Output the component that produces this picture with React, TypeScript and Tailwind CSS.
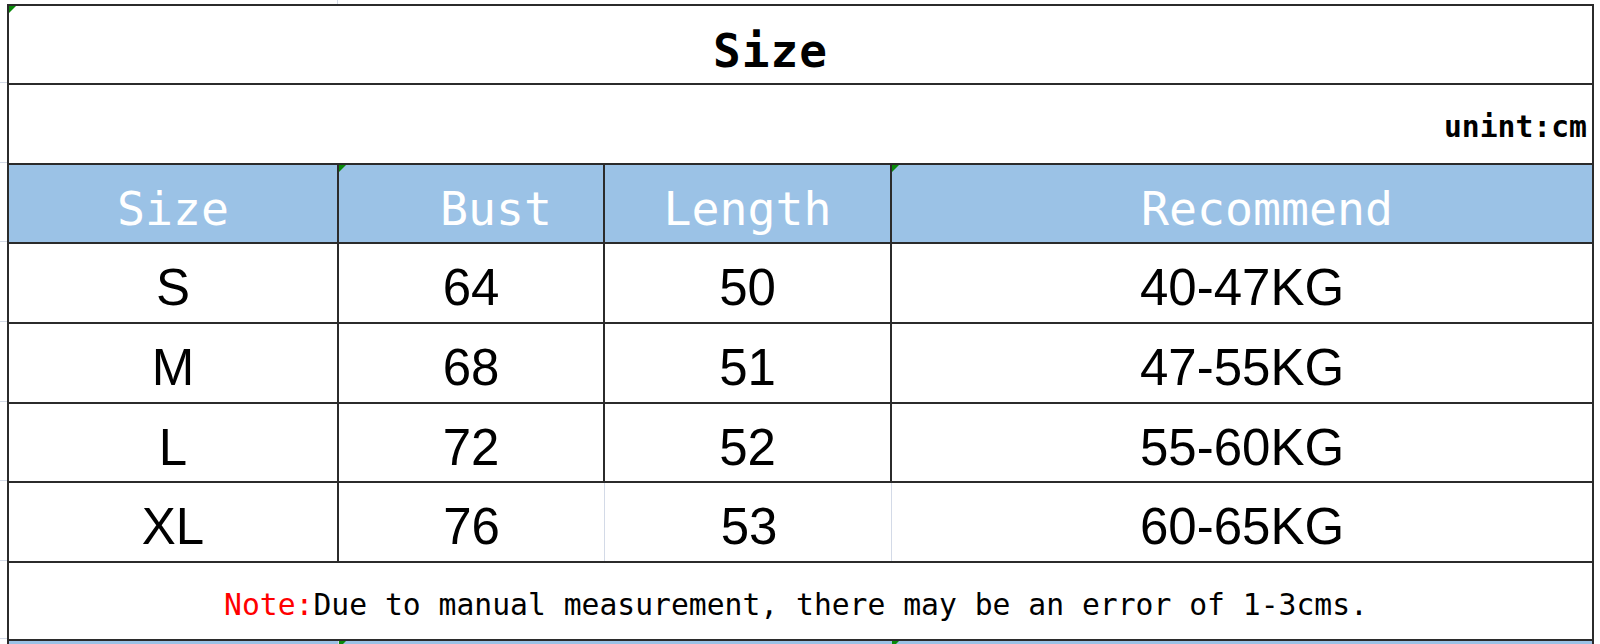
const ROWS = [
  { size: "S", bust: "64", length: "50", rec: "40-47KG" },
  { size: "M", bust: "68", length: "51", rec: "47-55KG" },
  { size: "L", bust: "72", length: "52", rec: "55-60KG" },
  { size: "XL", bust: "76", length: "53", rec: "60-65KG" },
];

// row heights incl. bottom border, matched to the sheet
const BODY_H = ["h-[80px]", "h-[80px]", "h-[79px]", "h-[80px]"];
const GUTTER_H = ["h-[83px]", "h-[80px]", "h-[79px]", "h-[80px]", "h-[80px]", "h-[79px]", "h-[80px]", "h-[78px]"];

const mono = "font-['DejaVu_Sans_Mono',monospace]";
const sans = "font-['Liberation_Sans',Arial,sans-serif]";

function Flag() {
  return (
    <span className="absolute left-0 top-0 w-0 h-0 border-t-[7px] border-t-[#0a8a0a] border-r-[7px] border-r-transparent" />
  );
}

export default function App() {
  return (
    <div className="w-[1600px] h-[644px] bg-white overflow-hidden flex">
      {/* spreadsheet gutter */}
      <div className="w-[7px] shrink-0 flex flex-col">
        {GUTTER_H.map((h, i) => (
          <div key={i} className={`${h} shrink-0 border-b border-[#d3dae7]`} />
        ))}
      </div>

      <div className="flex flex-col">
        {/* strip above the table */}
        <div className="h-[4px] shrink-0 flex">
          <div className="w-[331px] border-r border-[#d3dae7]" />
        </div>

        <div className="w-[1587px] shrink-0 border-2 border-b-0 border-[#2b2b2b] text-black">
          {/* title */}
          <div className={`relative h-[79px] border-b-2 border-[#2b2b2b] flex items-center justify-center pr-[60px] pt-[12px] ${mono}`}>
            <Flag />
            <span className="text-[46px] leading-none font-bold tracking-[1px]">Size</span>
          </div>

          {/* unit */}
          <div className={`h-[80px] border-b-2 border-[#2b2b2b] flex items-center justify-end pr-[5px] pt-[6px] ${mono}`}>
            <span className="text-[29.7px] leading-none font-bold">unint:cm</span>
          </div>

          {/* header */}
          <div className={`h-[79px] border-b-2 border-[#2b2b2b] bg-[#9bc2e6] flex text-white text-[46.5px] leading-none ${mono}`}>
            <div className="w-[330px] border-r-2 border-[#2b2b2b] flex items-center justify-center pt-[11px]">Size</div>
            <div className="relative w-[266px] border-r-2 border-[#2b2b2b] flex items-center justify-center pt-[11px] pl-[50px]">
              <Flag />
              Bust
            </div>
            <div className="w-[287px] border-r-2 border-[#2b2b2b] flex items-center justify-center pt-[11px]">Length</div>
            <div className="relative flex-1 flex items-center justify-center pt-[11px] pl-[50px]">
              <Flag />
              Recommend
            </div>
          </div>

          {/* body */}
          {ROWS.map((r, i) => {
            const last = i === ROWS.length - 1;
            const inner = last ? "border-[#d3dae7] border-r" : "border-[#2b2b2b] border-r-2";
            return (
              <div key={r.size} className={`${BODY_H[i]} border-b-2 border-[#2b2b2b] flex text-[51px] leading-none ${sans}`}>
                <div className="w-[330px] border-r-2 border-[#2b2b2b] flex items-center justify-center pt-[9px]">{r.size}</div>
                <div className={`w-[266px] ${inner} flex items-center justify-center pt-[9px]`}>{r.bust}</div>
                <div className={`w-[287px] ${inner} flex items-center justify-center pt-[9px] ${last ? "pl-[2px]" : ""}`}>{r.length}</div>
                <div className="flex-1 flex items-center justify-center pt-[9px]">{r.rec}</div>
              </div>
            );
          })}

          {/* note */}
          <div className={`h-[78px] border-b-2 border-[#2b2b2b] flex items-center justify-center pt-[8px] pr-[9px] ${mono}`}>
            <span className="text-[29.7px] leading-none whitespace-pre">
              <span className="text-[#ff0000]">Note:</span>Due to manual measurement, there may be an error of 1-3cms.
            </span>
          </div>

          {/* next row peeking in */}
          <div className="h-[3px] bg-[#9bc2e6] flex">
            <div className="w-[330px] border-r border-[#d3dae7]" />
            <div className="relative w-[266px]">
              <Flag />
            </div>
            <div className="w-[287px]" />
            <div className="relative flex-1">
              <Flag />
            </div>
          </div>
        </div>
      </div>
    </div>
  );
}
